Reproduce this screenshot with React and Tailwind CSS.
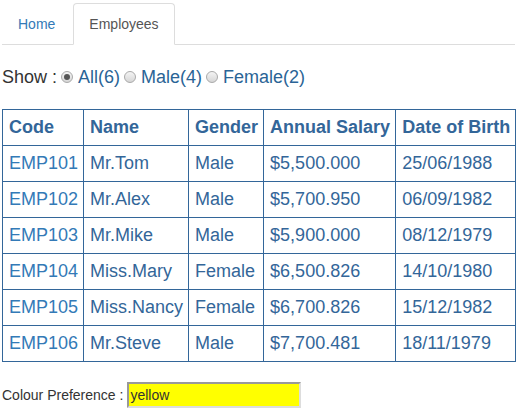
import { useState } from 'react'

const employees = [
  { code: 'EMP101', name: 'Mr.Tom', gender: 'Male', salary: '$5,500.000', dob: '25/06/1988' },
  { code: 'EMP102', name: 'Mr.Alex', gender: 'Male', salary: '$5,700.950', dob: '06/09/1982' },
  { code: 'EMP103', name: 'Mr.Mike', gender: 'Male', salary: '$5,900.000', dob: '08/12/1979' },
  { code: 'EMP104', name: 'Miss.Mary', gender: 'Female', salary: '$6,500.826', dob: '14/10/1980' },
  { code: 'EMP105', name: 'Miss.Nancy', gender: 'Female', salary: '$6,700.826', dob: '15/12/1982' },
  { code: 'EMP106', name: 'Mr.Steve', gender: 'Male', salary: '$7,700.481', dob: '18/11/1979' },
]

function Radio({ checked, onClick }) {
  return (
    <span
      onClick={onClick}
      className="inline-flex w-[12px] h-[12px] rounded-full border border-[#a9a9a9] bg-gradient-to-b from-[#f4f4f4] to-[#d6d6d6] items-center justify-center ml-[4px] mr-[5px] cursor-pointer"
    >
      {checked && <span className="w-[6px] h-[6px] rounded-full bg-[#555]" />}
    </span>
  )
}

export default function App() {
  const [filter, setFilter] = useState('All')
  const [colour, setColour] = useState('yellow')

  const cell = 'border border-[#336699] pl-[6px] pr-[5px] py-[5px] leading-[25px] text-left whitespace-nowrap'

  return (
    <div className="px-[2px] pt-[3px] font-['Liberation_Sans',Arial,sans-serif] text-[#333] bg-white min-h-[411px]">
      <ul className="flex border-b border-[#ddd] text-[14px] leading-[20px]">
        <li className="-mb-px mr-[2px]">
          <a className="block px-[15px] py-[10px] border border-transparent rounded-t text-[#337ab7] cursor-pointer">Home</a>
        </li>
        <li className="-mb-px mr-[2px]">
          <a className="block px-[15px] py-[10px] border border-[#ddd] border-b-white rounded-t bg-white text-[#555]">Employees</a>
        </li>
      </ul>

      <div className="mt-[19px] text-[18px] leading-[26px] flex items-center">
        <span>Show :</span>
        <Radio checked={filter === 'All'} onClick={() => setFilter('All')} />
        <span className="text-[#2a6496]">All(6)</span>
        <Radio checked={filter === 'Male'} onClick={() => setFilter('Male')} />
        <span className="text-[#2a6496]">Male(4)</span>
        <Radio checked={filter === 'Female'} onClick={() => setFilter('Female')} />
        <span className="text-[#2a6496]">Female(2)</span>
      </div>

      <table className="mt-[19px] border-collapse border border-[#336699] text-[18px] text-[#336699]">
        <thead>
          <tr>
            <th className={cell + ' font-bold'}>Code</th>
            <th className={cell + ' font-bold'}>Name</th>
            <th className={cell + ' font-bold'}>Gender</th>
            <th className={cell + ' font-bold'}>Annual Salary</th>
            <th className={cell + ' font-bold'}>Date of Birth</th>
          </tr>
        </thead>
        <tbody>
          {employees.map((e) => (
            <tr key={e.code}>
              <td className={cell + ' text-[#337ab7]'}>{e.code}</td>
              <td className={cell}>{e.name}</td>
              <td className={cell}>{e.gender}</td>
              <td className={cell}>{e.salary}</td>
              <td className={cell}>{e.dob}</td>
            </tr>
          ))}
        </tbody>
      </table>

      <div className="mt-[20px] flex items-center text-[14px]">
        <span className="mr-[4px]">Colour Preference :</span>
        <input
          value={colour}
          onChange={(ev) => setColour(ev.target.value)}
          className="w-[174px] h-[26px] bg-[#ffff00] border-2 border-t-[#999] border-l-[#999] border-r-[#ddd] border-b-[#ddd] px-[1px] text-[14px] text-[#333] outline-none font-['Liberation_Sans',Arial,sans-serif]"
        />
      </div>
    </div>
  )
}
